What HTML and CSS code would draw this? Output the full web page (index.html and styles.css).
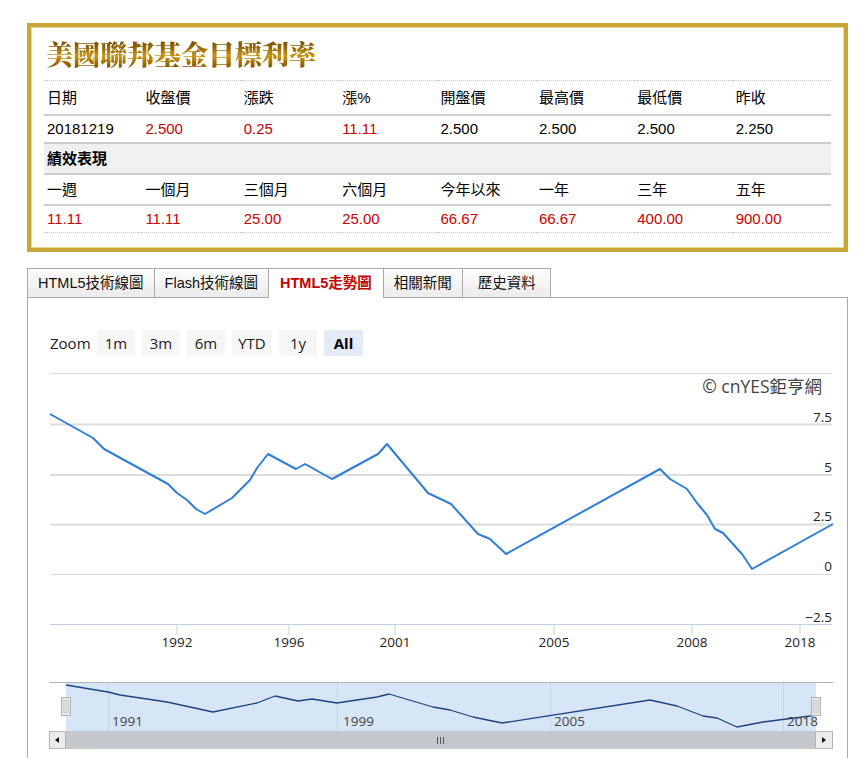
FILE: index.html
```html
<!DOCTYPE html>
<html lang="zh-Hant">
<head>
<meta charset="utf-8">
<title>美國聯邦基金目標利率</title>
<link rel="stylesheet" href="styles.css">
</head>
<body>
<div class="page">
  <section class="info-box">
    <h1 class="title">美國聯邦基金目標利率</h1>
    <table class="quote">
      <tr class="head first">
        <td>日期</td><td>收盤價</td><td>漲跌</td><td>漲%</td><td>開盤價</td><td>最高價</td><td>最低價</td><td>昨收</td>
      </tr>
      <tr class="vals">
        <td>20181219</td><td class="up">2.500</td><td class="up">0.25</td><td class="up">11.11</td><td>2.500</td><td>2.500</td><td>2.500</td><td>2.250</td>
      </tr>
      <tr class="section">
        <td colspan="8">績效表現</td>
      </tr>
      <tr class="head">
        <td>一週</td><td>一個月</td><td>三個月</td><td>六個月</td><td>今年以來</td><td>一年</td><td>三年</td><td>五年</td>
      </tr>
      <tr class="vals last">
        <td class="up">11.11</td><td class="up">11.11</td><td class="up">25.00</td><td class="up">25.00</td><td class="up">66.67</td><td class="up">66.67</td><td class="up">400.00</td><td class="up">900.00</td>
      </tr>
    </table>
  </section>

  <nav class="tabs">
    <div class="tab">HTML5技術線圖</div>
    <div class="tab">Flash技術線圖</div>
    <div class="tab active">HTML5走勢圖</div>
    <div class="tab">相關新聞</div>
    <div class="tab last">歷史資料</div>
  </nav>

  <div class="panel">
    <div class="zoom-row">
      <span class="zoom-label">Zoom</span>
      <button class="zbtn">1m</button>
      <button class="zbtn">3m</button>
      <button class="zbtn">6m</button>
      <button class="zbtn wide">YTD</button>
      <button class="zbtn">1y</button>
      <button class="zbtn active">All</button>
    </div>
    <svg class="chart" width="819" height="402" viewBox="28 356 819 402" xmlns="http://www.w3.org/2000/svg">
      <line class="frame" x1="50" y1="373.5" x2="832" y2="373.5"/>
      <text class="credit" x="822" y="393" text-anchor="end">© cnYES鉅亨網</text>

      <g class="grid">
        <line x1="50" x2="832" y1="424.5" y2="424.5"/>
        <line x1="50" x2="832" y1="475" y2="475"/>
        <line x1="50" x2="832" y1="524.5" y2="524.5"/>
        <line class="thin" x1="50" x2="832" y1="574.5" y2="574.5"/>
      </g>
      <line class="xaxis" x1="50" x2="832" y1="624.5" y2="624.5"/>
      <g class="ticks">
        <line x1="177" x2="177" y1="625" y2="635"/>
        <line x1="289" x2="289" y1="625" y2="635"/>
        <line x1="395" x2="395" y1="625" y2="635"/>
        <line x1="554" x2="554" y1="625" y2="635"/>
        <line x1="692" x2="692" y1="625" y2="635"/>
        <line x1="800" x2="800" y1="625" y2="635"/>
      </g>
      <g class="ylab" text-anchor="end">
        <text x="832" y="421.5">7.5</text>
        <text x="832" y="471.5">5</text>
        <text x="832" y="521">2.5</text>
        <text x="832" y="570.5">0</text>
        <text x="832" y="621.5">−2.5</text>
      </g>
      <g class="xlab" text-anchor="middle">
        <text x="177" y="646.5">1992</text>
        <text x="289" y="646.5">1996</text>
        <text x="395" y="646.5">2001</text>
        <text x="554" y="646.5">2005</text>
        <text x="692" y="646.5">2008</text>
        <text x="800" y="646.5">2018</text>
      </g>
      <path class="series" d="M50,414 L93,438 L104,449 L168,484 L177,493 L187,500 L196,509 L205,514 L232,498 L250,480 L257,468 L268,454 L296,469 L305,464 L332,479 L378,454 L387,444 L428,493 L451,504 L478,534 L490,539 L506,554 L660,469 L670,479 L687,489 L697,503 L707,515 L715,529 L723,533 L742,554 L752,569 L833,524"/>

      <!-- navigator -->
      <rect class="nav-mask" x="66" y="683" width="750" height="48"/>
      <g class="nav-grid">
        <line x1="108.5" x2="108.5" y1="683" y2="731"/>
        <line x1="337.5" x2="337.5" y1="683" y2="731"/>
        <line x1="550.5" x2="550.5" y1="683" y2="731"/>
        <line x1="783.5" x2="783.5" y1="683" y2="731"/>
      </g>
      <line class="nav-outline" x1="49" x2="833" y1="682.5" y2="682.5"/>
      <path class="nav-series" d="M66,685 L108,692 L120,695 L167,702 L213,712 L257,703 L275,696 L298,701 L312,699 L337,703 L377,697 L389,694 L433,707 L450,710 L473,717 L502,723 L650,700 L677,706 L703,716 L717,718 L737,727 L763,722 L810,716 L816,715"/>
      <g class="nav-lab">
        <text x="112" y="726">1991</text>
        <text x="343" y="726">1999</text>
        <text x="554" y="726">2005</text>
        <text x="787" y="726">2018</text>
      </g>
      <g class="handle">
        <rect x="61.5" y="697.5" width="9" height="18"/>
        <rect class="inner" x="63.5" y="700.5" width="5" height="12"/>
      </g>
      <g class="handle">
        <rect x="811.5" y="697.5" width="9" height="18"/>
        <rect class="inner" x="813.5" y="700.5" width="5" height="12"/>
      </g>

      <!-- scrollbar -->
      <rect class="sb-track" x="49" y="731" width="784" height="18"/>
      <rect class="sb-btn" x="49.5" y="731.5" width="16" height="17"/>
      <rect class="sb-btn" x="815.5" y="731.5" width="17" height="17"/>
      <path class="sb-arrow" d="M59,737 L59,743 L55,740 Z"/>
      <path class="sb-arrow" d="M822,737 L822,743 L826,740 Z"/>
      <g class="sb-grip">
        <line x1="437.5" x2="437.5" y1="737" y2="744"/>
        <line x1="440.5" x2="440.5" y1="737" y2="744"/>
        <line x1="443.5" x2="443.5" y1="737" y2="744"/>
      </g>
    </svg>
  </div>
</div>
</body>
</html>
```

FILE: styles.css
```css
* {
  box-sizing: border-box;
}

html,
body {
  margin: 0;
  padding: 0;
  background: #fff;
  overflow: hidden;
}

body {
  font-family: "Liberation Sans", "Noto Sans CJK TC", sans-serif;
  color: #000;
}

.page {
  padding: 23px 0 0 27px;
  width: 864px;
}

/* ---------- info box ---------- */
.info-box {
  width: 821px;
  border: 4px solid #c9a535;
  box-shadow: inset 0 0 0 1px #ead98f;
  padding: 9px 13px 15px;
}

.title {
  margin: 0 0 8px;
  padding-left: 2px;
  height: 36px;
  line-height: 36px;
  font-size: 27px;
  font-weight: 900;
  font-family: "Noto Serif CJK TC", "Noto Sans CJK TC", serif;
  background: linear-gradient(180deg, #5e3a00 0%, #9a6a04 35%, #c89612 55%, #a06c00 75%, #6a4200 100%);
  -webkit-background-clip: text;
  background-clip: text;
  color: transparent;
}

.quote {
  width: 787px;
  table-layout: fixed;
  border-collapse: separate;
  border-spacing: 0;
  font-size: 15px;
}

.quote td {
  padding: 0 0 0 3px;
  white-space: nowrap;
  vertical-align: middle;
  border-bottom: 2px solid #cdcdcd;
}

.quote .first td {
  border-top: 1px dotted #c4c4c4;
  height: 36px;
  line-height: 33px;
}

.quote .vals td {
  height: 28px;
  line-height: 26px;
}

.quote .section td {
  height: 31px;
  line-height: 29px;
  background: #f0f0f0;
  font-weight: 700;
}

.quote .head td {
  height: 31px;
  line-height: 29px;
}

.quote .first td {
  height: 36px;
}

.quote .vals.last td {
  height: 27px;
  border-bottom: 1px dotted #c4c4c4;
}

.quote .up {
  color: #cc0000;
}

/* ---------- tabs ---------- */
.tabs {
  display: flex;
  align-items: flex-start;
  margin-top: 16px;
}

.tab {
  height: 29px;
  line-height: 28px;
  padding: 0 10px;
  font-size: 14.5px;
  color: #111;
  border: 1px solid #a9a9a9;
  border-bottom: 0;
  background: linear-gradient(180deg, #fcfcfc 0%, #ececec 100%);
  white-space: nowrap;
}

.tab + .tab {
  margin-left: -1px;
}

.tab.active {
  position: relative;
  height: 30px;
  margin-bottom: -1px;
  padding: 0 11px;
  background: #fff;
  color: #c40000;
  font-weight: 700;
}

.tab.last {
  padding: 0 14px 0 15px;
}

/* ---------- panel ---------- */
.panel {
  width: 821px;
  border: 1px solid #a9a9a9;
  padding-bottom: 40px;
}

.zoom-row {
  display: flex;
  align-items: center;
  gap: 7px;
  height: 58px;
  padding: 32px 0 0 22px;
}

.zoom-label {
  width: 40px;
  font-family: "Open Sans", "Liberation Sans", sans-serif;
  font-size: 15px;
  color: #222;
}

.zbtn {
  width: 38px;
  height: 26px;
  padding: 0;
  border: 0;
  background: #f6f6f6;
  font-family: "Open Sans", "Liberation Sans", sans-serif;
  font-size: 15px;
  color: #222;
}

.zbtn.wide {
  width: 40px;
}

.zbtn.active {
  width: 39px;
  background: #e5ebf6;
  font-weight: 700;
  color: #000;
}

/* ---------- chart ---------- */
.chart {
  display: block;
}

.frame {
  stroke: #d9d9d9;
  stroke-width: 1;
}

.credit {
  font-family: "Open Sans", "Noto Sans CJK TC", sans-serif;
  font-size: 17.5px;
  fill: #444;
}

.grid line {
  stroke: #dcdcdc;
  stroke-width: 2;
}

.grid line.thin {
  stroke-width: 1;
}

.xaxis,
.ticks line {
  stroke: #c0d0e0;
  stroke-width: 1;
}

.ylab text,
.xlab text,
.nav-lab text {
  font-family: "Open Sans", "Liberation Sans", sans-serif;
  font-size: 13.5px;
  fill: #222;
}

.nav-lab text {
  fill: #444;
}

.series {
  fill: none;
  stroke: #2f7ed8;
  stroke-width: 2;
  stroke-linejoin: round;
}

.nav-mask {
  fill: #d7e6f7;
}

.nav-grid line {
  stroke: #c3d5ea;
  stroke-width: 1;
}

.nav-outline {
  stroke: #b2b1b6;
  stroke-width: 1;
}

.nav-series {
  fill: none;
  stroke: #1d467f;
  stroke-width: 1.3;
  stroke-linejoin: round;
}

.handle rect {
  fill: #ebe7e8;
  stroke: #b2b1b6;
  stroke-width: 1;
}

.handle rect.inner {
  fill: #dcdcdc;
  stroke: #cfcfcf;
}

.sb-track {
  fill: #c4c7cc;
}

.sb-btn {
  fill: #ececec;
  stroke: #b5b5b5;
  stroke-width: 1;
}

.sb-arrow {
  fill: #111;
}

.sb-grip line {
  stroke: #555;
  stroke-width: 1;
}
```
